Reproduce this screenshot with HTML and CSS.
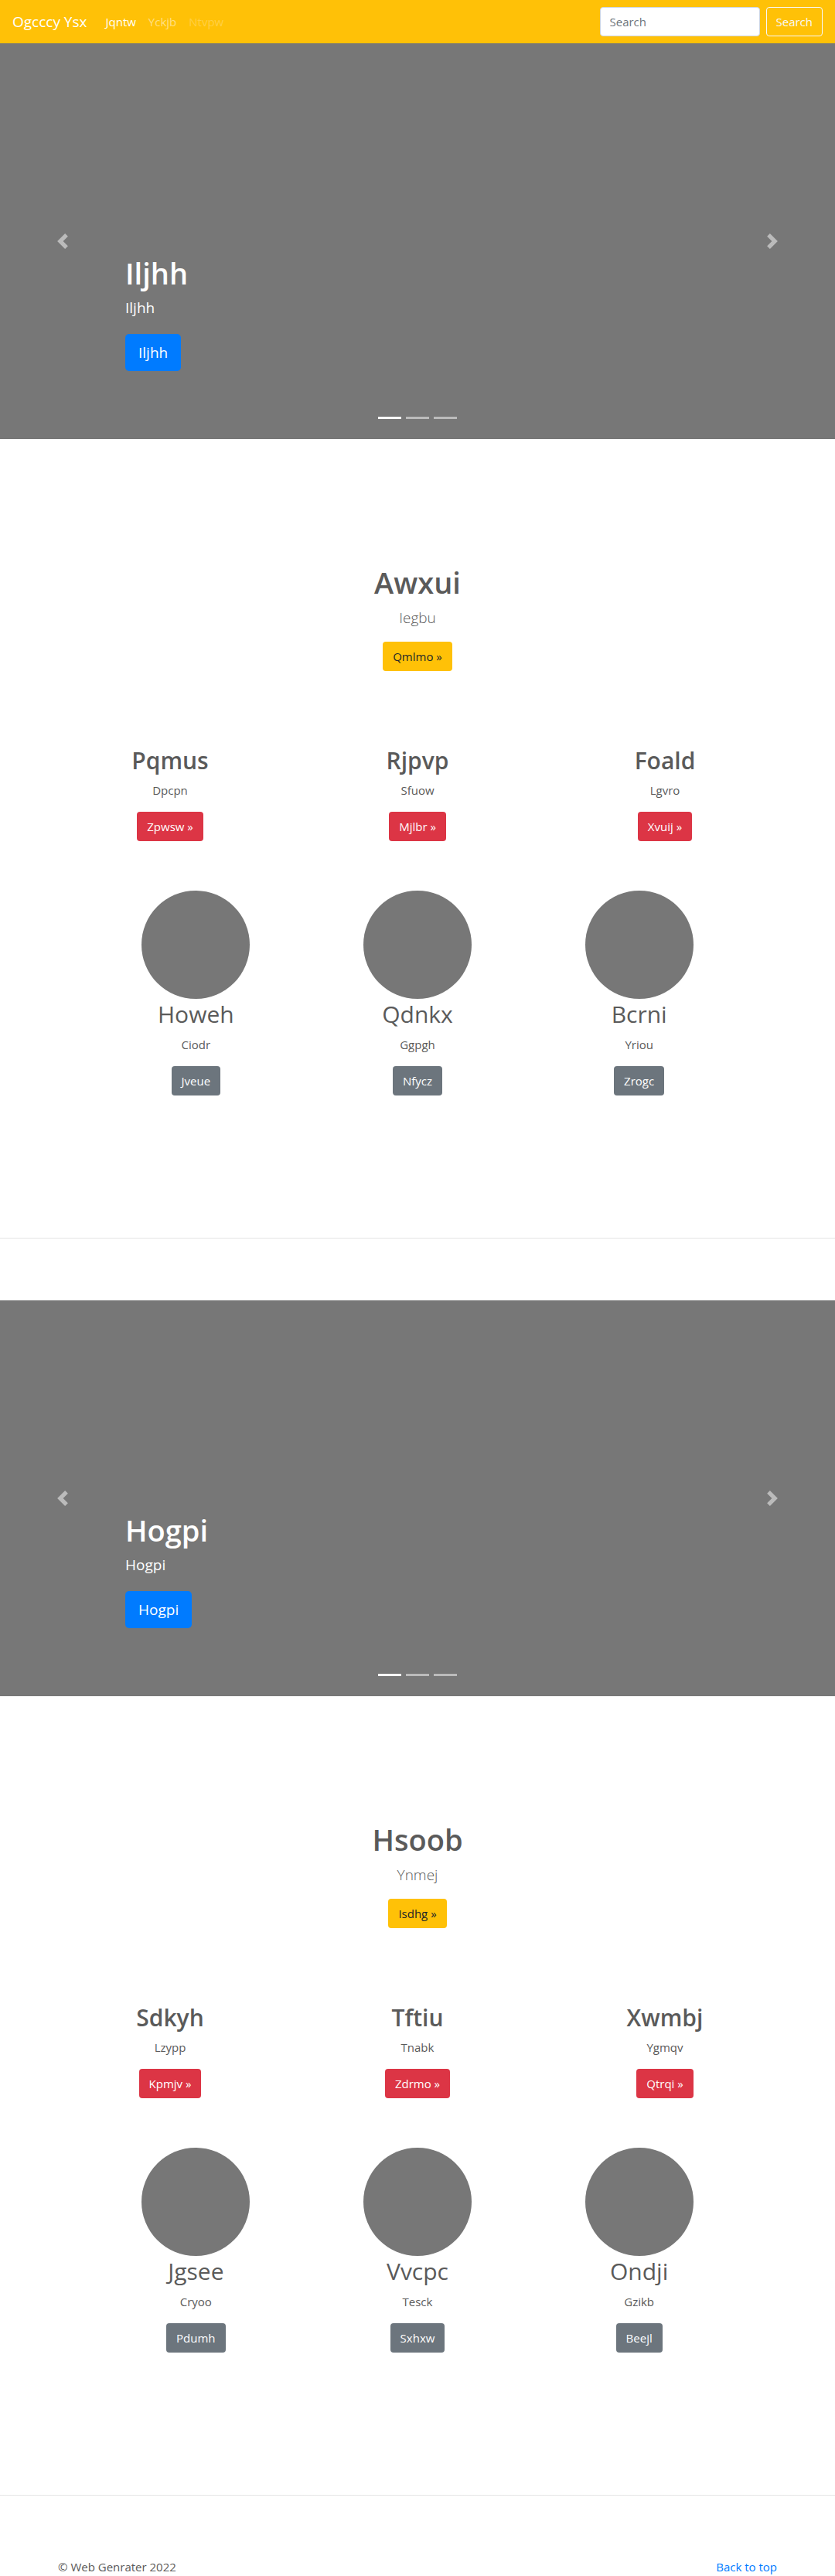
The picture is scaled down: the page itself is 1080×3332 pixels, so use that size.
FILE: index.html
```html
<!DOCTYPE html>
<html lang="en">
<head>
<meta charset="utf-8">
<meta name="viewport" content="width=device-width, initial-scale=1">
<title>Ogcccy Ysx</title>
<link rel="stylesheet" href="styles.css">
</head>
<body>
<header class="navbar" id="top">
  <a class="brand" href="#">Ogcccy Ysx</a>
  <nav class="nav">
    <a class="nav-link active" href="#">Jqntw</a>
    <a class="nav-link" href="#">Yckjb</a>
    <a class="nav-link disabled" href="#" aria-disabled="true">Ntvpw</a>
  </nav>
  <form class="search">
    <input class="search-input" type="search" placeholder="Search" aria-label="Search">
    <button class="btn btn-outline" type="submit">Search</button>
  </form>
</header>

<main>
  <section class="carousel">
    <button class="control" type="button" aria-label="Previous">
      <svg class="chevron" viewBox="0 0 8 8" aria-hidden="true"><path d="M5.25 0l-4 4 4 4 1.5-1.5-2.5-2.5 2.5-2.5-1.5-1.5z"/></svg>
    </button>
    <div class="caption">
      <h1 class="title">Iljhh</h1>
      <p class="caption-text">Iljhh</p>
      <a class="btn btn-primary btn-lg" href="#">Iljhh</a>
    </div>
    <button class="control" type="button" aria-label="Next">
      <svg class="chevron" viewBox="0 0 8 8" aria-hidden="true"><path d="M2.75 0l-1.5 1.5 2.5 2.5-2.5 2.5 1.5 1.5 4-4-4-4z"/></svg>
    </button>
    <div class="indicators">
      <button class="indicator current" type="button" aria-label="Slide 1"></button>
      <button class="indicator" type="button" aria-label="Slide 2"></button>
      <button class="indicator" type="button" aria-label="Slide 3"></button>
    </div>
  </section>

  <section class="intro">
    <h1 class="title">Awxui</h1>
    <p class="lead">Iegbu</p>
    <a class="btn btn-warning" href="#">Qmlmo »</a>
  </section>

  <section class="features">
    <article class="item">
      <h2 class="heading strong">Pqmus</h2>
      <p class="text">Dpcpn</p>
      <a class="btn btn-danger" href="#">Zpwsw »</a>
    </article>
    <article class="item">
      <h2 class="heading strong">Rjpvp</h2>
      <p class="text">Sfuow</p>
      <a class="btn btn-danger" href="#">Mjlbr »</a>
    </article>
    <article class="item">
      <h2 class="heading strong">Foald</h2>
      <p class="text">Lgvro</p>
      <a class="btn btn-danger" href="#">Xvuij »</a>
    </article>
  </section>

  <section class="profiles">
    <article class="item">
      <div class="avatar"></div>
      <h2 class="heading">Howeh</h2>
      <p class="text">Ciodr</p>
      <a class="btn btn-secondary" href="#">Jveue</a>
    </article>
    <article class="item">
      <div class="avatar"></div>
      <h2 class="heading">Qdnkx</h2>
      <p class="text">Ggpgh</p>
      <a class="btn btn-secondary" href="#">Nfycz</a>
    </article>
    <article class="item">
      <div class="avatar"></div>
      <h2 class="heading">Bcrni</h2>
      <p class="text">Yriou</p>
      <a class="btn btn-secondary" href="#">Zrogc</a>
    </article>
  </section>

  <hr class="divider">

  <section class="carousel">
    <button class="control" type="button" aria-label="Previous">
      <svg class="chevron" viewBox="0 0 8 8" aria-hidden="true"><path d="M5.25 0l-4 4 4 4 1.5-1.5-2.5-2.5 2.5-2.5-1.5-1.5z"/></svg>
    </button>
    <div class="caption">
      <h1 class="title">Hogpi</h1>
      <p class="caption-text">Hogpi</p>
      <a class="btn btn-primary btn-lg" href="#">Hogpi</a>
    </div>
    <button class="control" type="button" aria-label="Next">
      <svg class="chevron" viewBox="0 0 8 8" aria-hidden="true"><path d="M2.75 0l-1.5 1.5 2.5 2.5-2.5 2.5 1.5 1.5 4-4-4-4z"/></svg>
    </button>
    <div class="indicators">
      <button class="indicator current" type="button" aria-label="Slide 1"></button>
      <button class="indicator" type="button" aria-label="Slide 2"></button>
      <button class="indicator" type="button" aria-label="Slide 3"></button>
    </div>
  </section>

  <section class="intro">
    <h1 class="title">Hsoob</h1>
    <p class="lead">Ynmej</p>
    <a class="btn btn-warning" href="#">Isdhg »</a>
  </section>

  <section class="features">
    <article class="item">
      <h2 class="heading strong">Sdkyh</h2>
      <p class="text">Lzypp</p>
      <a class="btn btn-danger" href="#">Kpmjv »</a>
    </article>
    <article class="item">
      <h2 class="heading strong">Tftiu</h2>
      <p class="text">Tnabk</p>
      <a class="btn btn-danger" href="#">Zdrmo »</a>
    </article>
    <article class="item">
      <h2 class="heading strong">Xwmbj</h2>
      <p class="text">Ygmqv</p>
      <a class="btn btn-danger" href="#">Qtrqi »</a>
    </article>
  </section>

  <section class="profiles">
    <article class="item">
      <div class="avatar"></div>
      <h2 class="heading">Jgsee</h2>
      <p class="text">Cryoo</p>
      <a class="btn btn-secondary" href="#">Pdumh</a>
    </article>
    <article class="item">
      <div class="avatar"></div>
      <h2 class="heading">Vvcpc</h2>
      <p class="text">Tesck</p>
      <a class="btn btn-secondary" href="#">Sxhxw</a>
    </article>
    <article class="item">
      <div class="avatar"></div>
      <h2 class="heading">Ondji</h2>
      <p class="text">Gzikb</p>
      <a class="btn btn-secondary" href="#">Beejl</a>
    </article>
  </section>

  <hr class="divider">
</main>

<footer class="footer">
  <span>© Web Genrater 2022</span>
  <a class="top-link" href="#top">Back to top</a>
</footer>
</body>
</html>
```
FILE: styles.css
```css
* {
  box-sizing: border-box;
}

body {
  margin: 0;
  background: #fff;
  color: #5a5a5a;
  font-family: "Segoe UI", "Open Sans", "Noto Sans", sans-serif;
  font-size: 15px;
  line-height: 24px;
}

h1,
h2,
p {
  margin: 0;
}

a {
  text-decoration: none;
}

/* Navigation bar */
.navbar {
  display: flex;
  align-items: center;
  height: 56px;
  padding: 0 16px;
  background: #ffc107;
}

.brand {
  margin-right: 16px;
  color: #fff;
  font-size: 19px;
}

.nav {
  display: flex;
  flex: 1;
}

.nav-link {
  padding: 8px;
  color: rgba(255, 255, 255, 0.5);
}

.nav-link.active {
  color: #fff;
}

.nav-link.disabled {
  color: rgba(255, 255, 255, 0.25);
}

.search {
  display: flex;
  gap: 8px;
}

.search-input {
  width: 207px;
  height: 38px;
  padding: 6px 12px;
  border: 1px solid #ced4da;
  border-radius: 4px;
  background: #fff;
  color: #495057;
  font: inherit;
  appearance: none;
}

.search-input::placeholder {
  color: #6c757d;
  opacity: 1;
}

/* Buttons */
.btn {
  display: inline-block;
  padding: 6px 12px;
  border: 1px solid transparent;
  border-radius: 4px;
  color: #fff;
  font: inherit;
  font-size: 15px;
  line-height: 24px;
  vertical-align: top;
  white-space: nowrap;
}

.btn-lg {
  padding: 8px 16px;
  border-radius: 5px;
  font-size: 19px;
  line-height: 30px;
}

.btn-outline {
  border-color: #f8f9fa;
  background: transparent;
  color: #f8f9fa;
}

.btn-primary {
  background: #007bff;
}

.btn-warning {
  background: #ffc107;
  color: #212529;
}

.btn-danger {
  background: #dc3545;
}

.btn-secondary {
  background: #6c757d;
}

/* Carousel */
.carousel {
  position: relative;
  display: grid;
  grid-template-columns: 15% 1fr 15%;
  height: 512px;
  background: #777;
  color: #fff;
}

.control {
  display: flex;
  align-items: center;
  justify-content: center;
  padding: 0;
  border: 0;
  background: none;
  opacity: 0.5;
}

.chevron {
  width: 20px;
  height: 20px;
  fill: #fff;
}

.caption {
  align-self: end;
  padding-bottom: 88px;
}

.title {
  margin-bottom: 6px;
  font-size: 38px;
  font-weight: 600;
  line-height: 50px;
}

.caption-text {
  margin-bottom: 20px;
  font-size: 19px;
  line-height: 28px;
}

.indicators {
  position: absolute;
  right: 15%;
  bottom: 16px;
  left: 15%;
  display: flex;
  justify-content: center;
  gap: 6px;
}

.indicator {
  width: 30px;
  height: 23px;
  padding: 0;
  border: solid transparent;
  border-width: 10px 0;
  background: #fff;
  background-clip: padding-box;
  opacity: 0.5;
}

.indicator.current {
  opacity: 1;
}

/* Content sections */
.intro {
  padding: 160px 16px 96px;
  text-align: center;
}

.lead {
  margin-bottom: 16px;
  font-size: 19px;
  font-weight: 300;
  line-height: 30px;
}

.features,
.profiles {
  display: grid;
  grid-template-columns: repeat(3, 1fr);
  margin: 0 auto;
  text-align: center;
}

.features {
  max-width: 960px;
  padding-bottom: 64px;
}

.profiles {
  max-width: 860px;
  padding-bottom: 104px;
}

.avatar {
  width: 140px;
  height: 140px;
  margin: 0 auto;
  border-radius: 50%;
  background: #777;
}

.heading {
  margin-bottom: 7px;
  font-size: 30px;
  font-weight: 400;
  line-height: 40px;
}

.heading.strong {
  margin-bottom: 6px;
  font-weight: 600;
}

.text {
  margin-bottom: 16px;
}

.divider {
  margin: 80px 0;
  border: 0;
  border-top: 1px solid rgba(0, 0, 0, 0.1);
}

/* Footer */
.footer {
  display: flex;
  justify-content: space-between;
  max-width: 960px;
  margin: 0 auto;
  padding: 0 15px;
}

.top-link {
  color: #007bff;
}
```
